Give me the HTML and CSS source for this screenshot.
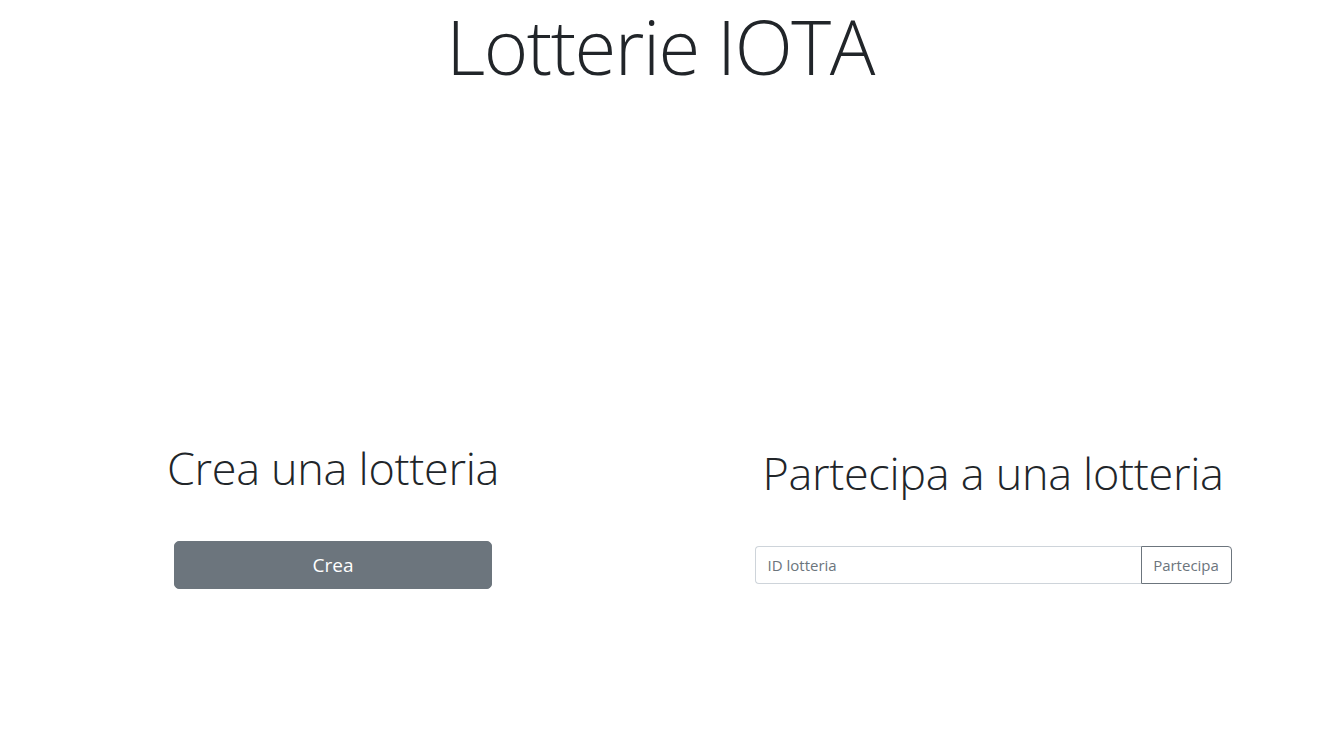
FILE: index.html
```html
<!DOCTYPE html>
<html lang="it">
<head>
<meta charset="utf-8">
<title>Lotterie IOTA</title>
<link rel="stylesheet" href="styles.css">
</head>
<body>
<header class="top">
  <h1 class="title">Lotterie IOTA</h1>
</header>
<main class="row">
  <section class="col">
    <h2 class="heading">Crea una lotteria</h2>
    <button class="btn-create" type="button">Crea</button>
  </section>
  <section class="col">
    <h2 class="heading">Partecipa a una lotteria</h2>
    <div class="input-group">
      <input class="field" type="text" placeholder="ID lotteria">
      <button class="btn-join" type="button">Partecipa</button>
    </div>
  </section>
</main>
</body>
</html>
```
FILE: styles.css
```css
* { box-sizing: border-box; }
html, body { margin: 0; padding: 0; background: #fff; }
body {
  font-family: "Open Sans", "Noto Sans", sans-serif;
  color: #212529;
  width: 1320px;
}
.top { text-align: center; padding-top: 8px; }
.title {
  margin: 0;
  font-size: 76px;
  font-weight: 300;
  line-height: 76px;
  letter-spacing: -1.5px;
}
.row {
  display: grid;
  grid-template-columns: 666px 654px;
  align-items: center;
  padding-top: 356px;
}
.col {
  display: flex;
  flex-direction: column;
  align-items: center;
}
.heading {
  margin: 0 0 45px;
  font-size: 45px;
  font-weight: 300;
  line-height: 56px;
  letter-spacing: -0.3px;
}
.btn-create {
  width: 318px;
  height: 48px;
  border: 1px solid #6c757d;
  border-radius: 5px;
  background: #6c757d;
  color: #fff;
  font-family: inherit;
  font-size: 19px;
  padding: 0;
}
.input-group {
  display: flex;
  width: 477px;
  height: 38px;
}
.field {
  flex: 1;
  min-width: 0;
  border: 1px solid #ced4da;
  border-right: none;
  border-radius: 4px 0 0 4px;
  padding: 0 12px;
  font-family: inherit;
  font-size: 15px;
  color: #495057;
}
.field::placeholder { color: #6c757d; }
.btn-join {
  width: 91px;
  border: 1px solid #6c757d;
  border-radius: 0 4px 4px 0;
  background: #fff;
  color: #6c757d;
  font-family: inherit;
  font-size: 15px;
  padding: 0;
}
```
